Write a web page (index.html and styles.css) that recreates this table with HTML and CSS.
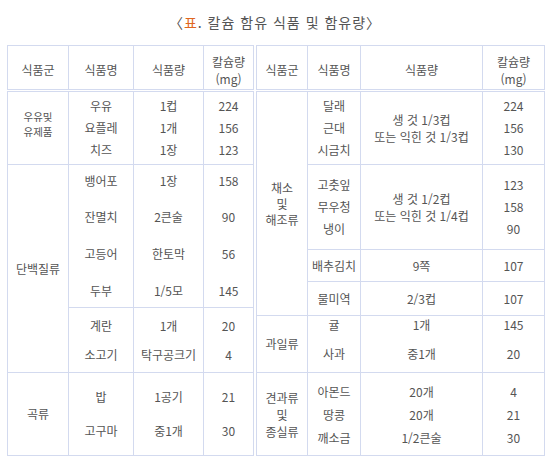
FILE: index.html
```html
<!DOCTYPE html>
<html lang="ko">
<head>
<meta charset="utf-8">
<link rel="stylesheet" href="styles.css">
</head>
<body>
<div class="page">
  <h1 class="title">〈<span class="mark">표</span>. 칼슘 함유 식품 및 함유량〉</h1>
  <div class="tables">
    <table class="tbl tbl-left">
      <colgroup><col class="c1"><col class="c2"><col class="c3"><col class="c4"></colgroup>
      <thead>
        <tr class="head"><th>식품군</th><th>식품명</th><th>식품량</th><th class="mg">칼슘량<br>(mg)</th></tr>
      </thead>
      <tbody>
        <tr class="l1">
          <td class="tight">우유및<br>유제품</td>
          <td class="lh22">우유<br>요플레<br>치즈</td>
          <td class="lh22">1컵<br>1개<br>1장</td>
          <td class="lh22">224<br>156<br>123</td>
        </tr>
        <tr class="l2">
          <td rowspan="2">단백질류</td>
          <td><div class="stack36">뱅어포<br>잔멸치<br>고등어<br>두부</div></td>
          <td><div class="stack36">1장<br>2큰술<br>한토막<br>1/5모</div></td>
          <td><div class="stack36">158<br>90<br>56<br>145</div></td>
        </tr>
        <tr class="l3">
          <td class="lh29">계란<br>소고기</td>
          <td class="lh29">1개<br>탁구공크기</td>
          <td class="lh29">20<br>4</td>
        </tr>
        <tr class="l4">
          <td>곡류</td>
          <td class="lh34">밥<br>고구마</td>
          <td class="lh34">1공기<br>중1개</td>
          <td class="lh34">21<br>30</td>
        </tr>
      </tbody>
    </table>
    <table class="tbl tbl-right">
      <colgroup><col class="d1"><col class="d2"><col class="d3"><col class="d4"></colgroup>
      <thead>
        <tr class="head"><th>식품군</th><th>식품명</th><th>식품량</th><th class="mg">칼슘량<br>(mg)</th></tr>
      </thead>
      <tbody>
        <tr class="r1">
          <td rowspan="4" class="lh16">채소<br>및<br>해조류</td>
          <td class="lh22">달래<br>근대<br>시금치</td>
          <td class="lh17">생 것 1/3컵<br>또는 익힌 것 1/3컵</td>
          <td class="lh22">224<br>156<br>130</td>
        </tr>
        <tr class="r2">
          <td class="lh22">고춧잎<br>무우청<br>냉이</td>
          <td class="lh17">생 것 1/2컵<br>또는 익힌 것 1/4컵</td>
          <td class="lh22">123<br>158<br>90</td>
        </tr>
        <tr class="r3"><td>배추김치</td><td>9쪽</td><td>107</td></tr>
        <tr class="r4"><td>물미역</td><td>2/3컵</td><td>107</td></tr>
        <tr class="r5">
          <td>과일류</td>
          <td><div class="stack29">귤<br>사과</div></td>
          <td><div class="stack29">1개<br>중1개</div></td>
          <td><div class="stack29">145<br>20</div></td>
        </tr>
        <tr class="r6">
          <td class="lh17">견과류<br>및<br>종실류</td>
          <td class="lh23">아몬드<br>땅콩<br>깨소금</td>
          <td class="lh23">20개<br>20개<br>1/2큰술</td>
          <td class="lh23">4<br>21<br>30</td>
        </tr>
      </tbody>
    </table>
  </div>
</div>
</body>
</html>
```

FILE: styles.css
```css
html, body {
  margin: 0;
  padding: 0;
  background: #ffffff;
}

.page {
  width: 550px;
  height: 476px;
  font-family: "Noto Sans CJK KR", "Noto Sans", sans-serif;
  color: #555555;
}

.title {
  margin: 0;
  padding-top: 12px;
  height: 33px;
  box-sizing: border-box;
  text-align: center;
  font-size: 14px;
  line-height: 20px;
  font-weight: normal;
  letter-spacing: 1px;
  color: #555555;
}

.mark {
  color: #e0661e;
}

.tables {
  display: flex;
  gap: 2px;
  padding-left: 7px;
  padding-top: 12px;
}

.tbl {
  border-collapse: collapse;
  table-layout: fixed;
  font-size: 12px;
  color: #555555;
  background: #ffffff;
}

.tbl th,
.tbl td {
  border: 1px solid #d3daef;
  padding: 0;
  text-align: center;
  vertical-align: middle;
  font-weight: normal;
  line-height: 16px;
  white-space: nowrap;
}

.tbl thead th {
  border-bottom: 3px double #d3daef;
  padding-top: 4px;
}

.tbl th.mg {
  line-height: 17px;
}

.tbl-left { width: 246px; }
.c1 { width: 61px; }
.c2 { width: 65px; }
.c3 { width: 70px; }
.c4 { width: 50px; }

.tbl-right { width: 288px; }
.d1 { width: 51px; }
.d2 { width: 53px; }
.d3 { width: 122px; }
.d4 { width: 62px; }

.head { height: 45px; }
.l1 { height: 74px; }
.l2 { height: 143px; }
.l3 { height: 65px; }
.l4 { height: 83px; }

.r1 { height: 74px; }
.r2 { height: 85px; }
.r3 { height: 32px; }
.r4 { height: 34px; }
.r5 { height: 57px; }
.r6 { height: 83px; }

.tbl td.tight {
  font-size: 10.5px;
  line-height: 15.5px;
  padding-bottom: 8px;
}
.tbl td.lh16 { line-height: 16px; }
.tbl td.lh17 { line-height: 17px; }
.tbl td.lh22 { line-height: 22px; }
.tbl td.lh23 { line-height: 23px; }
.tbl td.lh29 { line-height: 29px; }
.tbl td.lh34 { line-height: 34px; }

.stack36 {
  line-height: 36.6px;
  margin: -3px 0;
}

.stack29 {
  line-height: 29px;
  margin: -10px 0 0;
}
```
